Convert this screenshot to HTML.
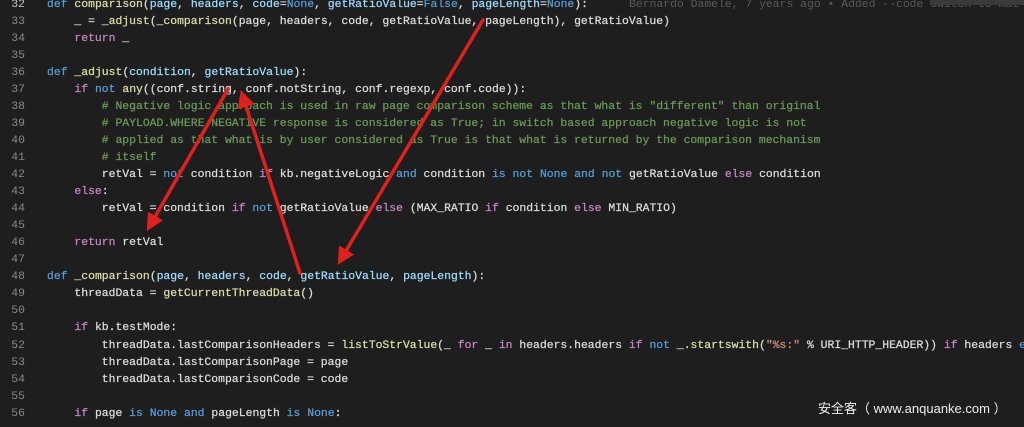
<!DOCTYPE html>
<html><head><meta charset="utf-8"><style>
body{margin:0;width:1024px;height:427px;background:#1e1e1e;overflow:hidden;position:relative;font-family:"Liberation Mono",monospace;font-size:11.42px;}
.l{position:absolute;left:0;height:17.05px;line-height:17.05px;white-space:pre;color:#dcdcdc;-webkit-text-stroke:0.25px currentColor;}
.n{position:absolute;left:0;width:25px;text-align:right;color:#8a8a8a;-webkit-text-stroke:0;}
.c{position:absolute;left:47px;}
.k{color:#569cd6}.f{color:#dcdcaa}.p{color:#9cdcfe}.m{color:#c586c0}.g{color:#6a9955}.s{color:#ce9178}
.blame{color:#5a5a5a;-webkit-text-stroke:0}
.wm{position:absolute;left:818px;top:398px;color:#eee;font-family:"Liberation Sans","Noto Sans CJK SC",sans-serif;font-size:13px;white-space:pre;}
</style></head><body>
<div class="l" style="top:-4.5px"><span class="n" style="color:#c6c6c6">32</span><span class="c"><span class="k">def</span> <span class="f">comparison</span>(<span class="p">page</span>, <span class="p">headers</span>, <span class="p">code</span>=<span class="k">None</span>, <span class="p">getRatioValue</span>=<span class="k">False</span>, <span class="p">pageLength</span>=<span class="k">None</span>):      <span class="blame">Bernardo Damele, 7 years ago • Added --code switch to mat</span></span></div>
<div class="l" style="top:12.55px"><span class="n">33</span><span class="c">    _ = <span class="f">_adjust</span>(<span class="f">_comparison</span>(page, headers, code, getRatioValue, pageLength), getRatioValue)</span></div>
<div class="l" style="top:29.6px"><span class="n">34</span><span class="c">    <span class="m">return</span> _</span></div>
<div class="l" style="top:46.65px"><span class="n">35</span></div>
<div class="l" style="top:63.7px"><span class="n">36</span><span class="c"><span class="k">def</span> <span class="f">_adjust</span>(<span class="p">condition</span>, <span class="p">getRatioValue</span>):</span></div>
<div class="l" style="top:80.75px"><span class="n">37</span><span class="c">    <span class="m">if</span> <span class="k">not</span> <span class="f">any</span>((conf.string, conf.notString, conf.regexp, conf.code)):</span></div>
<div class="l" style="top:97.8px"><span class="n">38</span><span class="c g">        # Negative logic approach is used in raw page comparison scheme as that what is "different" than original</span></div>
<div class="l" style="top:114.85px"><span class="n">39</span><span class="c g">        # PAYLOAD.WHERE.NEGATIVE response is considered as True; in switch based approach negative logic is not</span></div>
<div class="l" style="top:131.9px"><span class="n">40</span><span class="c g">        # applied as that what is by user considered as True is that what is returned by the comparison mechanism</span></div>
<div class="l" style="top:148.95px"><span class="n">41</span><span class="c g">        # itself</span></div>
<div class="l" style="top:166px"><span class="n">42</span><span class="c">        retVal = <span class="k">not</span> condition <span class="m">if</span> kb.negativeLogic <span class="k">and</span> condition <span class="k">is</span> <span class="k">not</span> <span class="k">None</span> <span class="k">and</span> <span class="k">not</span> getRatioValue <span class="m">else</span> condition</span></div>
<div class="l" style="top:183.05px"><span class="n">43</span><span class="c">    <span class="m">else</span>:</span></div>
<div class="l" style="top:200.1px"><span class="n">44</span><span class="c">        retVal = condition <span class="m">if</span> <span class="k">not</span> getRatioValue <span class="m">else</span> (MAX_RATIO <span class="m">if</span> condition <span class="m">else</span> MIN_RATIO)</span></div>
<div class="l" style="top:217.15px"><span class="n">45</span></div>
<div class="l" style="top:234.2px"><span class="n">46</span><span class="c">    <span class="m">return</span> retVal</span></div>
<div class="l" style="top:251.25px"><span class="n">47</span></div>
<div class="l" style="top:268.3px"><span class="n">48</span><span class="c"><span class="k">def</span> <span class="f">_comparison</span>(<span class="p">page</span>, <span class="p">headers</span>, <span class="p">code</span>, <span class="p">getRatioValue</span>, <span class="p">pageLength</span>):</span></div>
<div class="l" style="top:285.35px"><span class="n">49</span><span class="c">    threadData = <span class="f">getCurrentThreadData</span>()</span></div>
<div class="l" style="top:302.4px"><span class="n">50</span></div>
<div class="l" style="top:319.45px"><span class="n">51</span><span class="c">    <span class="m">if</span> kb.testMode:</span></div>
<div class="l" style="top:336.5px"><span class="n">52</span><span class="c">        threadData.lastComparisonHeaders = <span class="f">listToStrValue</span>(_ <span class="m">for</span> _ <span class="m">in</span> headers.headers <span class="m">if</span> <span class="k">not</span> _.<span class="f">startswith</span>(<span class="s">"%s:"</span> % URI_HTTP_HEADER)) <span class="m">if</span> headers <span class="k">else</span></span></div>
<div class="l" style="top:353.55px"><span class="n">53</span><span class="c">        threadData.lastComparisonPage = page</span></div>
<div class="l" style="top:370.6px"><span class="n">54</span><span class="c">        threadData.lastComparisonCode = code</span></div>
<div class="l" style="top:387.65px"><span class="n">55</span></div>
<div class="l" style="top:404.7px"><span class="n">56</span><span class="c">    <span class="m">if</span> page <span class="k">is</span> <span class="k">None</span> <span class="k">and</span> pageLength <span class="k">is</span> <span class="k">None</span>:</span></div>
<div style="position:absolute;left:930px;top:0;width:94px;height:5px;background:#3a3a3a"></div>
<div class="wm">安全客（ www.anquanke.com ）</div>
<svg width="1024" height="427" style="position:absolute;left:0;top:0">
<defs><marker id="a" markerWidth="5" markerHeight="5" refX="2" refY="2.5" orient="auto" markerUnits="strokeWidth"><path d="M0,0 L5,2.5 L0,5 z" fill="#e0201c"/></marker></defs>
<g stroke="#e0201c" stroke-width="3.5" fill="none" stroke-linecap="round">
<line x1="483" y1="20" x2="343" y2="256" marker-end="url(#a)"/>
<line x1="300" y1="273" x2="244" y2="100" marker-end="url(#a)"/>
<line x1="228" y1="89" x2="152" y2="222" marker-end="url(#a)"/>
</g></svg>
</body></html>
